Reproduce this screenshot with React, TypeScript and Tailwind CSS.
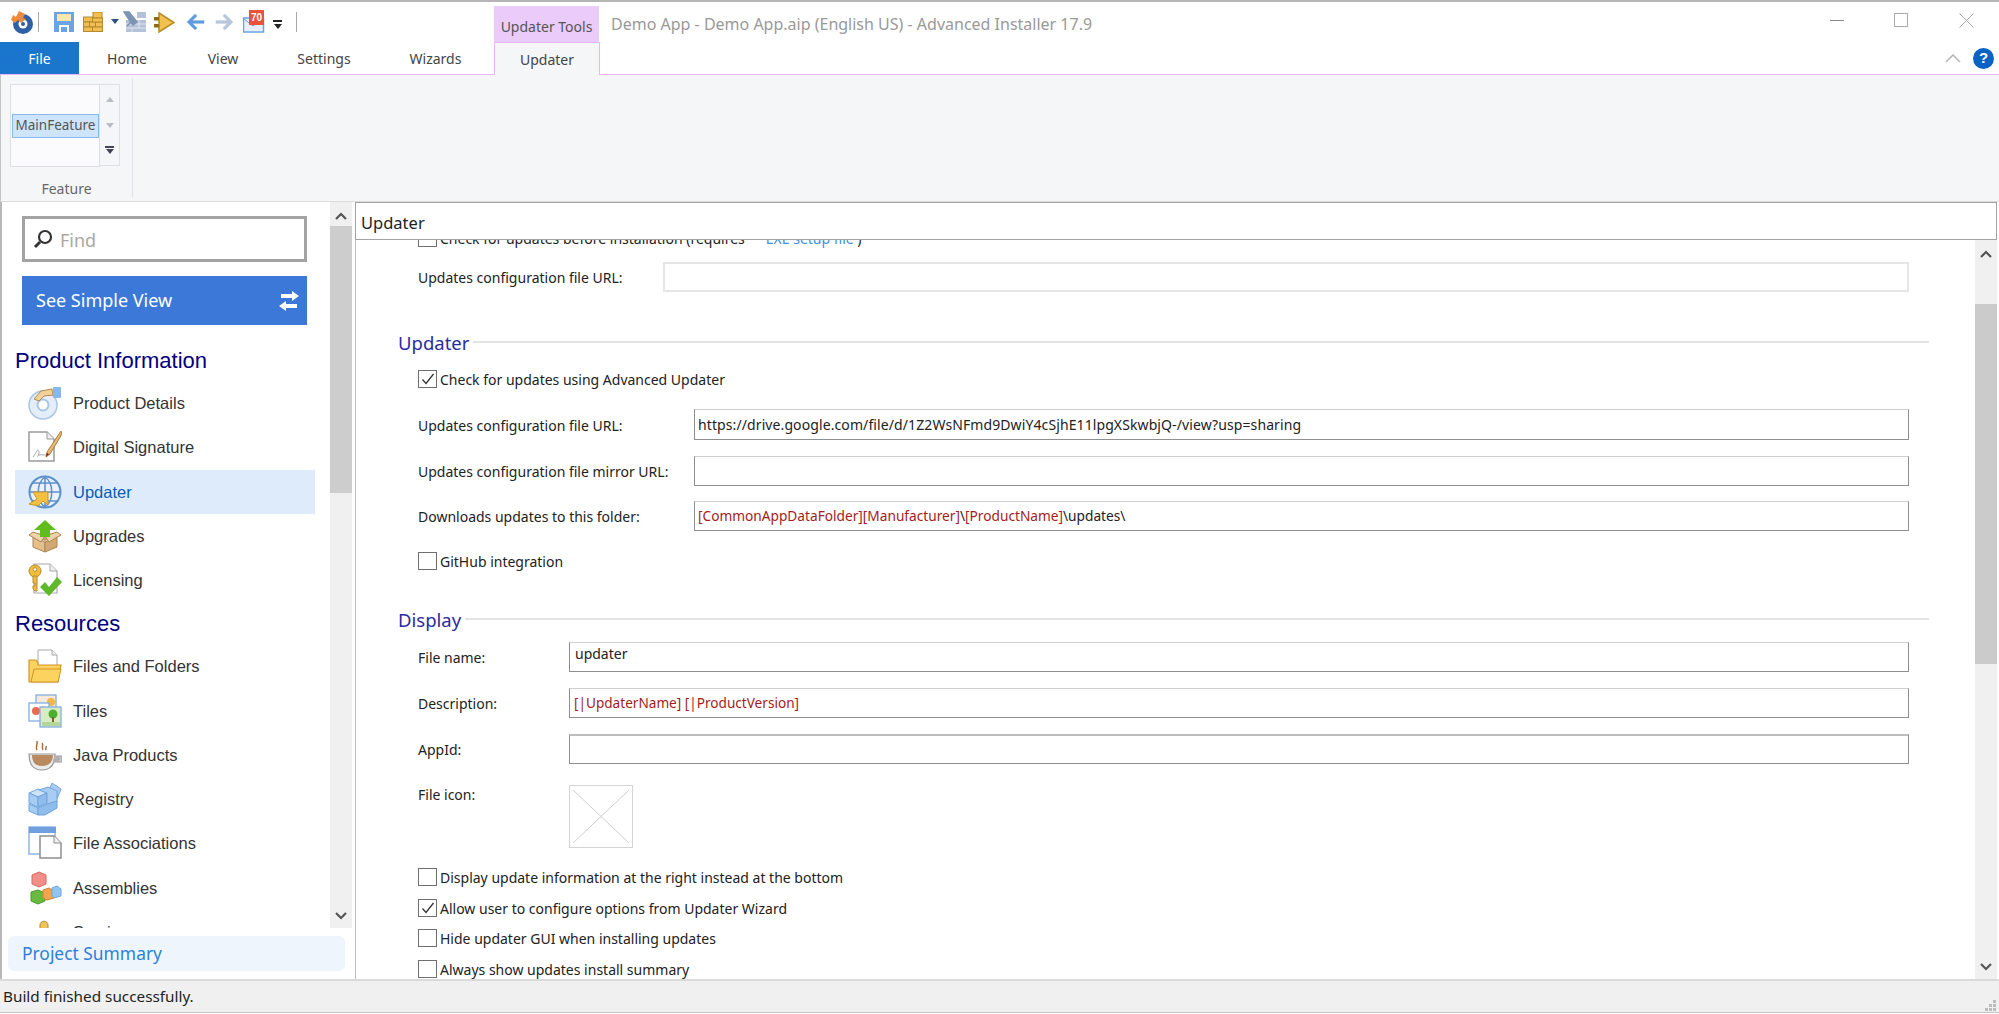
import React from "react";

const ui = "font-[Noto_Sans,sans-serif]";
const arial = "font-[Liberation_Sans,Arial,sans-serif]";

function Chevron({ dir, className }: { dir: "up" | "down"; className?: string }) {
  return (
    <svg width="12" height="8" viewBox="0 0 12 8" className={className}>
      <path d={dir === "up" ? "M1 7 L6 2 L11 7" : "M1 1 L6 6 L11 1"} fill="none" stroke="#555" strokeWidth="2.2" />
    </svg>
  );
}

const Logo = () => (
  <svg width="24" height="24" viewBox="0 0 24 24">
    <circle cx="13" cy="14" r="10" fill="#2f5fa5" />
    <circle cx="13" cy="14" r="4.5" fill="#fff" />
    <circle cx="13" cy="14" r="2" fill="#2f5fa5" />
    <path d="M1 10 L3 5 L6 7 L9 1 L15 4 L13 8 L16 9 L11 13 L8 10 L5 13 Z" fill="#ee8a3c" />
  </svg>
);
const Save = () => (
  <svg width="20" height="20" viewBox="0 0 20 20">
    <path d="M0 0H20V20H15V13H5V20H0Z" fill="#6ba3e4" />
    <rect x="3" y="2" width="14" height="7" fill="#fbe6ae" />
    <rect x="7" y="15" width="6" height="5" fill="#6ba3e4" />
  </svg>
);
const Bricks = () => {
  const f = "#f1bf4f";
  const s = "#b58a2c";
  return (
    <svg width="20" height="20" viewBox="0 0 20 20">
      <rect x="10" y="0" width="9" height="6" fill={f} stroke={s} />
      <rect x="0.5" y="5" width="9" height="5" fill={f} stroke={s} />
      <rect x="0.5" y="10" width="6" height="5" fill={f} stroke={s} />
      <rect x="6.5" y="10" width="6" height="5" fill={f} stroke={s} />
      <rect x="12.5" y="10" width="7" height="5" fill={f} stroke={s} />
      <rect x="0.5" y="15" width="9" height="4.5" fill={f} stroke={s} />
      <rect x="9.5" y="15" width="10" height="4.5" fill={f} stroke={s} />
      <rect x="9.5" y="6" width="10" height="4" fill={f} stroke={s} />
    </svg>
  );
};
const Build = () => (
  <svg width="24" height="22" viewBox="0 0 24 22">
    <rect x="3" y="9" width="20" height="12" fill="#b3c2d6" />
    <path d="M3 13H23M3 17H23M9 9V13M16 13V17M9 17V21M16 9V13" stroke="#dfe5ee" strokeWidth="1" />
    <rect x="14" y="1" width="9" height="6" fill="#b3c2d6" />
    <path d="M1 1 L6 1 L10 6 L14 11 L10 14 L5 7Z M10 9 L4 15" fill="#7d93b2" stroke="#7d93b2" strokeWidth="1.5" />
  </svg>
);
const Run = () => (
  <svg width="21" height="21" viewBox="0 0 21 21">
    <path d="M5 1 L20 10.5 L5 20Z" fill="#f2c14f" stroke="#b98b25" strokeWidth="1.5" />
    <rect x="0" y="5" width="5" height="3.5" fill="#8f6a1e" />
    <rect x="0" y="12" width="5" height="3.5" fill="#8f6a1e" />
  </svg>
);
const ArrowNav = ({ dir, color, halo }: { dir: "l" | "r"; color: string; halo: string }) => (
  <svg width="20" height="20" viewBox="0 0 20 20" style={{ transform: dir === "r" ? "scaleX(-1)" : undefined }}>
    <path d="M10 1 L1 10 L10 19 L12 16 L8 12 H19 V8 H8 L12 4Z" fill={halo} />
    <path d="M10 3 L3 10 L10 17 M3 10 H18" fill="none" stroke={color} strokeWidth="3" />
  </svg>
);
const Mail = () => (
  <div className="relative w-[22px] h-[19px]">
    <svg width="22" height="19" viewBox="0 0 22 19" className="absolute left-0 top-0">
      <rect x="0.5" y="4" width="20" height="14" fill="#e7f0fb" stroke="#6ba3e4" strokeWidth="1.5" />
      <path d="M1 5 L10 12 L19 5" fill="none" stroke="#6ba3e4" />
    </svg>
    <div className={`absolute left-[6px] top-[-4px] w-[15px] h-[15px] bg-[#e8533a] text-white text-[10px] font-bold leading-[15px] text-center ${arial}`}>
      70
    </div>
  </div>
);

const Icons: Record<string, React.ReactNode> = {
  details: (
    <svg width="34" height="34" viewBox="0 0 34 34">
      <circle cx="15" cy="19" r="14" fill="#e3eef9" stroke="#a8c6e6" strokeWidth="1.5" />
      <circle cx="15" cy="19" r="5.5" fill="#fff" stroke="#a8c6e6" strokeWidth="2" />
      <path d="M6 13 L13 5 L24 3 L25 9 L16 10 L11 15 Z" fill="#f2d19a" stroke="#b08a50" />
      <rect x="25" y="1" width="8" height="11" rx="1" fill="#86b7ee" />
    </svg>
  ),
  signature: (
    <svg width="34" height="34" viewBox="0 0 34 34">
      <path d="M1 2 H19 L26 9 V31 H1 Z" fill="#fff" stroke="#9a9a9a" strokeWidth="1.5" />
      <path d="M19 2 V9 H26" fill="#eee" stroke="#9a9a9a" />
      <path d="M5 27 C9 22 10 17 11 22 C11 27 8 27 11 25 C14 24 16 26 20 24" fill="none" stroke="#aaa" />
      <path d="M33 1 L19 22 L18 27 L22 24 L34 4 Z" fill="#e5b976" stroke="#a87c3d" />
      <path d="M18 27 L19 23 L21 24Z" fill="#7a1f1f" />
    </svg>
  ),
  updater: (
    <svg width="34" height="34" viewBox="0 0 34 34">
      <circle cx="17" cy="17" r="15.5" fill="#e9f2fb" stroke="#5d8fca" strokeWidth="2" />
      <path d="M2 17 H32 M5 8 H29 M5 26 H29 M17 2 V32 M17 2 C8 8 8 26 17 32 M17 2 C26 8 26 26 17 32" fill="none" stroke="#5d8fca" strokeWidth="1.5" />
      <path d="M5 17 H20 V30 L15 26 L10 31 L1 29 L9 24 Z" fill="#f3c042" stroke="#c9962a" />
    </svg>
  ),
  upgrades: (
    <svg width="34" height="34" viewBox="0 0 34 34">
      <path d="M3 17 L17 22 L31 17 L17 13 Z" fill="#c7a071" />
      <path d="M5 18 L17 23 V33 L5 28 Z" fill="#e5c08c" stroke="#ad8451" />
      <path d="M29 18 L17 23 V33 L29 28 Z" fill="#d2a872" stroke="#ad8451" />
      <path d="M1 16 L5 13 L17 17 L13 23 Z" fill="#efd3a8" stroke="#ad8451" />
      <path d="M33 16 L29 13 L17 17 L21 23 Z" fill="#efd3a8" stroke="#ad8451" />
      <path d="M17 1 L28 11 H22 V18 H12 V11 H6 Z" fill="#5fbd1c" />
    </svg>
  ),
  licensing: (
    <svg width="34" height="34" viewBox="0 0 34 34">
      <path d="M6 1 H22 L29 8 V30 H6 Z" fill="#fff" stroke="#aaa" strokeWidth="1.2" />
      <path d="M22 1 V8 H29" fill="#eee" stroke="#aaa" />
      <circle cx="7" cy="8" r="6" fill="#f0bd3c" stroke="#b8892a" />
      <circle cx="7" cy="6.5" r="1.8" fill="#fff" stroke="#b8892a" />
      <path d="M5 13 H9 V28 H7 L5 26 V23 H7 V20 H5 Z" fill="#f0bd3c" stroke="#b8892a" />
      <path d="M12 24 L17 19 L21 24 L29 14 L34 19 L21 33 Z" fill="#5fb82a" />
    </svg>
  ),
  files: (
    <svg width="34" height="34" viewBox="0 0 34 34">
      <path d="M10 1 H24 L29 6 V18 H10 Z" fill="#fff" stroke="#aaa" />
      <path d="M24 1 V6 H29" fill="#eee" stroke="#aaa" />
      <path d="M1 33 V11 H8 L10 14 V16 H33 L30 33 Z" fill="#fdd35f" stroke="#d2952a" strokeWidth="1.2" />
      <path d="M3 33 L6 20 H33 L30 33 Z" fill="#fdd35f" stroke="#d2952a" />
    </svg>
  ),
  tiles: (
    <svg width="34" height="34" viewBox="0 0 34 34">
      <rect x="8" y="1" width="20" height="18" fill="#f3eadb" stroke="#83aee0" strokeWidth="1.3" />
      <circle cx="23" cy="8" r="4" fill="#f3b640" />
      <rect x="1" y="9" width="20" height="18" fill="#fff" stroke="#83aee0" strokeWidth="1.3" />
      <circle cx="8" cy="17" r="4" fill="#ea6a53" />
      <circle cx="15" cy="14" r="2" fill="#f3c24c" />
      <rect x="12" y="13" width="21" height="20" fill="#d6ecc5" stroke="#83aee0" strokeWidth="1.3" />
      <circle cx="25" cy="20" r="4.5" fill="#4caf2d" />
      <rect x="24" y="23" width="2" height="6" fill="#8a5a2b" />
      <rect x="14" y="28" width="18" height="4" fill="#b5d69a" />
    </svg>
  ),
  java: (
    <svg width="34" height="34" viewBox="0 0 34 34">
      <path d="M9 12 C7 9 10 7 9 3 M15 12 C13 9 16 7 14 5 M18 12 C17 10 19 9 18 8" fill="none" stroke="#a56f3c" strokeWidth="1.5" />
      <path d="M1 16 H27 C27 26 23 32 14 32 C5 32 1 26 1 16 Z" fill="#ececec" stroke="#999" strokeWidth="1.2" />
      <path d="M4 17 H25 C25 24 21 28 14 28 C7 28 4 24 4 17 Z" fill="#b98a60" />
      <path d="M26 18 H34 V24 H25 M26 20 H31 V22 H25" fill="#c9c9c9" stroke="#999" strokeWidth="1" />
    </svg>
  ),
  registry: (
    <svg width="34" height="34" viewBox="0 0 34 34">
      <path d="M24 1 L33 7 L29 17 L20 11 Z" fill="#a9cdf2" stroke="#6fa5df" />
      <path d="M1 11 L10 7 L19 11 L10 15 Z" fill="#cfe3f8" stroke="#6fa5df" />
      <path d="M1 11 V21 L10 25 V15 Z" fill="#a9cdf2" stroke="#6fa5df" />
      <path d="M19 11 V21 L10 25 V15 Z" fill="#8fbcea" stroke="#6fa5df" />
      <path d="M11 8 L20 5 L29 9 L29 20 L19 24 L19 11 Z" fill="#a9cdf2" stroke="#6fa5df" />
      <path d="M1 22 L10 26 V33 L1 29 Z" fill="#a9cdf2" stroke="#6fa5df" />
      <path d="M10 26 L19 22 L29 19 V26 L17 33 H10 Z" fill="#8fbcea" stroke="#6fa5df" />
    </svg>
  ),
  assoc: (
    <svg width="34" height="34" viewBox="0 0 34 34">
      <rect x="1" y="1" width="26" height="27" fill="#fff" stroke="#8db7e6" strokeWidth="1.5" />
      <rect x="1" y="1" width="27" height="6" fill="#6f9fde" />
      <path d="M12 10 H26 L33 17 V32 H12 Z" fill="#fff" stroke="#8f8f8f" strokeWidth="1.5" />
      <path d="M26 10 V17 H33" fill="#eee" stroke="#8f8f8f" />
    </svg>
  ),
  assemblies: (
    <svg width="34" height="34" viewBox="0 0 34 34">
      <path d="M4 4 L11 1 L18 4 V13 L11 16 L4 13 Z" fill="#f08f87" stroke="#d96b62" />
      <path d="M3 21 L10 19 L17 22 V30 L10 33 L3 30 Z" fill="#69bb3f" stroke="#4d9a2c" />
      <path d="M15 19 L21 17 L26 20 V27 L19 29 L15 27 Z" fill="#f2a54f" stroke="#d48530" />
      <path d="M24 17 L29 15 L33 18 V25 L26 27 L24 25 Z" fill="#91c4f0" stroke="#6ea5dc" />
    </svg>
  ),
  services: (
    <svg width="34" height="34" viewBox="0 0 34 34">
      <path d="M5 14 H12 V10 C12 5 20 5 20 10 V14 H27 V33 H5 Z" fill="#f0c35c" stroke="#b58a2c" />
    </svg>
  ),
};

function NavItem({ icon, label, active }: { icon: string; label: string; active?: boolean }) {
  return (
    <div className={`flex items-center h-[44.25px] ml-[13px] w-[300px] pl-[13px] ${active ? "bg-[#deebfb] text-[#0b5cb5]" : "text-[#333]"}`}>
      <div className="w-[34px] h-[34px] shrink-0">{Icons[icon]}</div>
      <span className="ml-[11px] text-[16.5px] leading-5">{label}</span>
    </div>
  );
}

function Box({ checked }: { checked?: boolean }) {
  return (
    <span className="w-[19px] h-[18px] shrink-0 border border-[#6f6f6f] bg-white flex items-center justify-center">
      {checked && (
        <svg width="14" height="12" viewBox="0 0 14 12">
          <path d="M1.5 6.5 L5 10.5 L12.5 1" fill="none" stroke="#333" strokeWidth="1.3" />
        </svg>
      )}
    </span>
  );
}

function CheckRow({ checked, className = "", children }: { checked?: boolean; className?: string; children: React.ReactNode }) {
  return (
    <div className={`flex items-center h-[18px] ml-[62px] text-[#222] text-[14px] ${className}`}>
      <Box checked={checked} />
      <span className="ml-[3px] whitespace-nowrap">{children}</span>
    </div>
  );
}

function Field({
  label,
  labelW,
  children,
  disabled,
  thick,
  h = "h-[30px]",
  mt,
  textCls = "items-center",
}: {
  label: string;
  labelW: string;
  children?: React.ReactNode;
  disabled?: boolean;
  thick?: boolean;
  h?: string;
  mt: string;
  textCls?: string;
}) {
  return (
    <div className={`flex ml-[62px] mr-[66px] items-center ${h} ${mt}`}>
      <span className={`${labelW} shrink-0 text-[14px] text-[#222] whitespace-nowrap`}>{label}</span>
      <div
        className={`flex-1 h-full flex px-[3px] text-[14px] text-[#222] whitespace-nowrap ${textCls} ${
          disabled ? "border-2 border-[#e6e6e6]" : `border border-[#8f8f8f] ${thick ? "border-t-2 border-t-[#bdbdbd]" : "border-t-[#cfcfcf]"}`
        }`}
      >
        {children}
      </div>
    </div>
  );
}

function Section({ title, mt }: { title: string; mt: string }) {
  return (
    <div className={`flex items-center h-6 ml-[42px] mr-[46px] ${mt}`}>
      <span className="text-[18.5px] text-[#2b2ba0]">{title}</span>
      <div className="flex-1 h-[2px] bg-[#e3e3e3] ml-[4px] -mt-[2px]" />
    </div>
  );
}

export default function App() {
  return (
    <div className={`${ui} relative w-[1999px] h-[1014px] overflow-hidden bg-white flex flex-col border-t-2 border-t-[#b5b5b5]`}>
      {/* Title bar */}
      <div className="flex h-[40px] items-center pl-[10px] shrink-0">
        <Logo />
        <div className="w-px h-[20px] bg-[#aaa] ml-[4px]" />
        <div className="ml-[15px]"><Save /></div>
        <div className="ml-[9px]"><Bricks /></div>
        <div className="ml-[8px] mb-[2px] w-0 h-0 border-x-[4px] border-x-transparent border-t-[5px] border-t-[#2d4f86]" />
        <div className="ml-[4px]"><Build /></div>
        <div className="ml-[7px]"><Run /></div>
        <div className="ml-[11px]"><ArrowNav dir="l" color="#5e9ae0" halo="#e4eef9" /></div>
        <div className="ml-[8px]"><ArrowNav dir="r" color="#b6c6dc" halo="#eef2f7" /></div>
        <div className="ml-[9px] mt-[2px]"><Mail /></div>
        <div className="ml-[8px] mt-[5px] flex flex-col items-center gap-[2px]">
          <div className="w-[9px] h-[1.5px] bg-[#222]" />
          <div className="w-0 h-0 border-x-[4.5px] border-x-transparent border-t-[5px] border-t-[#222]" />
        </div>
        <div className="w-px h-[20px] bg-[#aaa] ml-[14px]" />
        <div className="ml-[197px] w-[105px] self-end h-[36px] bg-[#ebcbf9] text-[#555] text-[14px] pt-[4px] flex items-center justify-center whitespace-nowrap">
          Updater Tools
        </div>
        <div className="ml-[12px] mt-[3px] text-[16px] text-[#999] whitespace-nowrap">Demo App - Demo App.aip (English US) - Advanced Installer 17.9</div>
        <div className="ml-auto flex items-center pr-[25px] -mt-[4px]">
          <div className="w-[14px] h-px bg-[#888]" />
          <div className="w-[14px] h-[14px] border border-[#aaa] ml-[50px]" />
          <svg width="15" height="15" viewBox="0 0 15 15" className="ml-[51px]">
            <path d="M0.5 0.5 L14.5 14.5 M14.5 0.5 L0.5 14.5" stroke="#aaa" strokeWidth="1" />
          </svg>
        </div>
      </div>

      {/* Tabs */}
      <div className="flex h-[33px] shrink-0 border-b border-b-[#e8b6f8] text-[14px] text-[#444] relative">
        <div className="w-[79px] h-[32px] bg-[#1a76cc] text-white flex items-center justify-center">File</div>
        <div className="w-[96px] flex items-center justify-center">Home</div>
        <div className="w-[96px] flex items-center justify-center">View</div>
        <div className="w-[106px] flex items-center justify-center">Settings</div>
        <div className="w-[117px] flex items-center justify-center">Wizards</div>
        <div className="w-[106px] h-[33px] bg-[#f5f6f8] border-x border-t border-[#e8b6f8] flex items-center justify-center">Updater</div>
        <div className="ml-auto flex items-center pr-[5px] gap-[12px]">
          <svg width="16" height="9" viewBox="0 0 16 9">
            <path d="M1 8 L8 1 L15 8" fill="none" stroke="#b5b5b5" strokeWidth="1.5" />
          </svg>
          <div className={`w-[21px] h-[21px] rounded-full bg-[#0a62c4] text-white text-[15px] font-bold flex items-center justify-center ${arial}`}>?</div>
        </div>
      </div>

      {/* Ribbon */}
      <div className="flex h-[127px] shrink-0 bg-[#f5f6f8] border-b border-b-[#dcdcdc] border-l border-l-[#c4c4c4] relative">
        <div className="w-[132px] h-[120px] mt-[3px] border-r border-r-[#e2e3e6] flex flex-col">
          <div className="flex ml-[9px] mt-[6px]">
            <div className="w-[90px] h-[83px] bg-[#fbfbfd] border border-[#dfe0e3] flex items-center pl-px">
              <div className="w-[88px] h-[24px] bg-[#cde4fb] border border-[#86b9ec] text-[13.5px] text-[#555] flex items-center justify-center whitespace-nowrap">MainFeature</div>
            </div>
            <div className="w-[20px] h-[82px] border border-l-0 border-[#dfe0e3] flex flex-col items-center">
              <div className="mt-[12px] w-0 h-0 border-x-[4px] border-x-transparent border-b-[5px] border-b-[#b8bcc4]" />
              <div className="mt-[21px] w-0 h-0 border-x-[4px] border-x-transparent border-t-[5px] border-t-[#b8bcc4]" />
              <div className="mt-[18px] w-[9px] h-[1.5px] bg-[#445]" />
              <div className="mt-[1.5px] w-0 h-0 border-x-[4.5px] border-x-transparent border-t-[5px] border-t-[#445]" />
            </div>
          </div>
          <div className="mt-[11px] text-center text-[14px] text-[#666]">Feature</div>
        </div>
      </div>

      {/* Body */}
      <div className="flex flex-1 min-h-0">
        {/* Sidebar */}
        <div className="w-[355px] shrink-0 flex flex-col border-l-2 border-l-[#b8b8b8]">
          <div className="flex h-[726px] shrink-0">
            <div className={`w-[328px] overflow-hidden ${arial}`}>
              <div className={`${ui} mt-[14px] ml-[20px] w-[285px] h-[46px] border-[3px] border-[#a3a3a3] flex items-center pl-[8px]`}>
                <svg width="20" height="20" viewBox="0 0 20 20">
                  <circle cx="12" cy="8" r="6" fill="#fff" stroke="#333" strokeWidth="2.2" />
                  <path d="M7 13 L2 18" stroke="#333" strokeWidth="3" />
                </svg>
                <span className="ml-[7px] text-[18px] text-[#a8a8a8] pt-[2px]">Find</span>
              </div>
              <div className={`${ui} mt-[14px] ml-[20px] w-[285px] h-[49px] bg-[#3c78d8] text-white text-[18px] flex items-center pl-[14px] pr-[7px] justify-between`}>
                See Simple View
                <svg width="22" height="22" viewBox="0 0 22 22">
                  <path d="M14 1 L21 6 L14 11 V8 H3 V4 H14 Z" fill="#fff" />
                  <path d="M8 11 L1 16 L8 21 V18 H19 V14 H8 Z" fill="#fff" />
                </svg>
              </div>
              <div className="mt-[21px] ml-[13px] h-[30px] text-[22px] leading-[30px] text-[#000080]">Product Information</div>
              <div className="mt-[5px]">
                <NavItem icon="details" label="Product Details" />
                <NavItem icon="signature" label="Digital Signature" />
                <NavItem icon="updater" label="Updater" active />
                <NavItem icon="upgrades" label="Upgrades" />
                <NavItem icon="licensing" label="Licensing" />
              </div>
              <div className="mt-[7px] ml-[13px] h-[30px] text-[22px] leading-[30px] text-[#000080]">Resources</div>
              <div className="mt-[5px]">
                <NavItem icon="files" label="Files and Folders" />
                <NavItem icon="tiles" label="Tiles" />
                <NavItem icon="java" label="Java Products" />
                <NavItem icon="registry" label="Registry" />
                <NavItem icon="assoc" label="File Associations" />
                <NavItem icon="assemblies" label="Assemblies" />
                <NavItem icon="services" label="Services" />
              </div>
            </div>
            <div className="w-[22px] bg-[#f0f0f0] flex flex-col items-center relative">
              <Chevron dir="up" className="mt-[10px]" />
              <div className="w-full h-[267px] bg-[#cdcdcd] mt-[6px]" />
              <Chevron dir="down" className="mt-auto mb-[8px]" />
            </div>
          </div>
          <div className="mt-[8px] ml-[6px] w-[337px] h-[35px] rounded-md bg-[#eef5fd] text-[#2f80d8] text-[17.4px] flex items-center pl-[14px]">Project Summary</div>
        </div>

        {/* Main */}
        <div className="flex-1 min-w-0 flex flex-col pr-[2px]">
          <div className="h-[38px] shrink-0 border border-[#a3a3a3] flex items-center pl-[5px] pt-[4px] text-[16.5px] text-[#222]">Updater</div>
          <div className="flex flex-1 min-h-0 border-l border-l-[#bdbdbd]">
            <div className="flex-1 min-w-0 overflow-hidden">
              <div className="-mt-[11px]">
                <CheckRow>
                  Check for updates before installation (requires
                  <span className="ml-[21px] text-[#3d8fe0]">EXE setup file</span>
                  <span> )</span>
                </CheckRow>
                <Field mt="mt-[15px]" label="Updates configuration file URL:" labelW="w-[245px]" disabled />
                <Section title="Updater" mt="mt-[39px]" />
                <CheckRow checked className="mt-[15px]">Check for updates using Advanced Updater</CheckRow>
                <Field mt="mt-[21px]" h="h-[31px]" label="Updates configuration file URL:" labelW="w-[276px] pt-[1px]">
                  <span className="tracking-[0.1px]">https://drive.google.com/file/d/1Z2WsNFmd9DwiY4cSjhE11lpgXSkwbjQ-/view?usp=sharing</span>
                </Field>
                <Field mt="mt-[16px]" label="Updates configuration file mirror URL:" labelW="w-[276px] pt-[1px]" />
                <Field mt="mt-[15px]" label="Downloads updates to this folder:" labelW="w-[276px]">
                  <span className="text-[13.7px] text-[#a31d1d]">[CommonAppDataFolder][Manufacturer]<span className="text-[#222]">\</span>[ProductName]<span className="text-[#222]">\updates\</span></span>
                </Field>
                <CheckRow className="mt-[21px]">GitHub integration</CheckRow>
                <Section title="Display" mt="mt-[38px]" />
                <Field mt="mt-[10px]" label="File name:" labelW="w-[151px]" textCls="items-start pl-[5px]">updater</Field>
                <Field mt="mt-[16px]" label="Description:" labelW="w-[151px]" textCls="items-center pl-[4px]">
                  <span className="text-[13.6px] text-[#a31d1d]">[|UpdaterName] [|ProductVersion]</span>
                </Field>
                <Field mt="mt-[16px]" label="AppId:" labelW="w-[151px]" thick />
                <div className="flex mt-[21px] ml-[62px] h-[63px]">
                  <span className="w-[151px] text-[14px] text-[#222] -mt-px">File icon:</span>
                  <div className="w-[64px] h-[63px] border border-[#d4d4d4] bg-white">
                    <svg width="62" height="61" viewBox="0 0 62 61">
                      <path d="M3 4 L59 57 M59 4 L3 57" stroke="#cfcfcf" strokeWidth="1" />
                    </svg>
                  </div>
                </div>
                <CheckRow className="mt-[20px] text-[13.9px]">Display update information at the right instead at the bottom</CheckRow>
                <CheckRow checked className="mt-[13px]">Allow user to configure options from Updater Wizard</CheckRow>
                <CheckRow className="mt-[12px] text-[13.9px]">Hide updater GUI when installing updates</CheckRow>
                <CheckRow className="mt-[13px]">Always show updates install summary</CheckRow>
              </div>
            </div>
            <div className="w-[22px] shrink-0 bg-[#f0f0f0] flex flex-col items-center">
              <Chevron dir="up" className="mt-[10px]" />
              <div className="w-full h-[360px] bg-[#cbcbcb] mt-[46px]" />
              <Chevron dir="down" className="mt-auto mb-[8px]" />
            </div>
          </div>
        </div>
      </div>

      {/* Status bar */}
      <div className="h-[34px] shrink-0 bg-[#f0f0f0] border-t-2 border-t-[#dadada] border-b border-b-[#c4c4c4] mb-px flex items-center pl-[3px] text-[15.3px] text-[#222] relative">
        Build finished successfully.
        <svg width="12" height="12" viewBox="0 0 12 12" className="absolute right-[2px] bottom-[1px]">
          <path d="M8 1h3v3H8zM4 5h3v3H4zM8 5h3v3H8zM0 9h3v3H0zM4 9h3v3H4zM8 9h3v3H8z" fill="#bdbdbd" />
        </svg>
      </div>
    </div>
  );
}
